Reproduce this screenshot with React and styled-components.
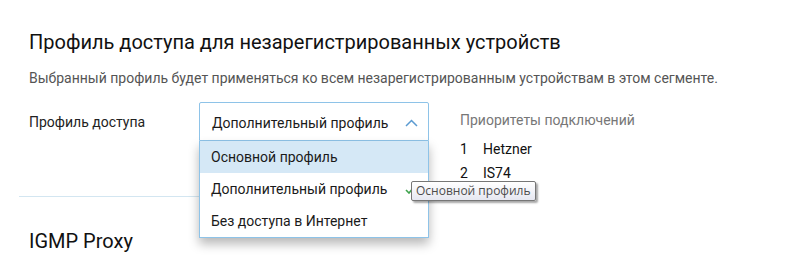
import React from "react";
import styled, { createGlobalStyle } from "styled-components";

const Global = createGlobalStyle`
  html, body { margin: 0; padding: 0; background: #fff; }
  body { font-family: Roboto, "Noto Sans", sans-serif; color: #1f1f1f; }
`;

const Page = styled.div`
  position: relative;
  width: 811px;
  height: 259px;
  overflow: hidden;
  padding-top: 30px;
  box-sizing: border-box;
`;

const Section = styled.section`
  padding: 0 29px;
`;

const Title = styled.h2`
  margin: 0;
  font-size: 20px;
  line-height: 24px;
  font-weight: 400;
  color: #111;
`;

const Description = styled.p`
  margin: 14px 0 0;
  font-size: 14px;
  line-height: 20px;
  color: #555;
`;

const FormRow = styled.div`
  display: flex;
  align-items: flex-start;
  margin-top: 14px;
`;

const Label = styled.div`
  width: 170px;
  padding-top: 10px;
  font-size: 14px;
  line-height: 20px;
  color: #222;
`;

const SelectWrap = styled.div`
  position: relative;
  width: 230px;
`;

const SelectBox = styled.div`
  box-sizing: border-box;
  height: 39px;
  border: 1px solid #8ec3e8;
  border-radius: 2px 2px 0 0;
  display: flex;
  align-items: flex-start;
  justify-content: space-between;
  padding: 10px 10px 0 12px;
  font-size: 14px;
  line-height: 20px;
  color: #1a1a1a;
  background: #fff;
`;

const Chevron = styled.svg`
  margin-top: 6px;
`;

const Dropdown = styled.ul`
  position: absolute;
  left: 0;
  top: 39px;
  width: 230px;
  box-sizing: border-box;
  margin: 0;
  padding: 0;
  list-style: none;
  background: #fff;
  border: 1px solid #8ec3e8;
  border-top: none;
  box-shadow: 0 6px 10px rgba(0, 0, 0, 0.28);
  z-index: 2;
`;

const Option = styled.li`
  position: relative;
  height: 32px;
  padding: 0 11px;
  font-size: 14px;
  line-height: 32px;
  color: #1a1a1a;
  background: ${(p) => (p.$active ? "#d5e8f6" : "#fff")};
`;

const Check = styled.svg`
  position: absolute;
  right: 13px;
  top: 13px;
`;

const Priorities = styled.div`
  margin-left: 31px;
  padding-top: 8px;
`;

const PrioritiesHeader = styled.div`
  font-size: 14px;
  line-height: 20px;
  color: #777;
  margin-bottom: 7px;
`;

const PriorityRow = styled.div`
  display: flex;
  font-size: 14px;
  line-height: 24px;
  color: #111;
`;

const PriorityNum = styled.span`
  width: 23px;
`;

const Divider = styled.hr`
  margin: 11px 0 0 19px;
  width: 420px;
  border: none;
  border-top: 1px solid #d3e6f1;
`;

const IgmpSection = styled(Section)`
  margin-top: 32px;
`;

const Tooltip = styled.div`
  position: absolute;
  left: 411px;
  top: 181px;
  height: 18px;
  padding: 0 4px;
  border: 1px solid #767676;
  border-radius: 2px;
  background: linear-gradient(#ffffff, #e6e7f1);
  box-shadow: 2px 2px 2px rgba(0, 0, 0, 0.35);
  font-family: "Open Sans", "Noto Sans", sans-serif;
  font-size: 12px;
  line-height: 18px;
  color: #4c4c4c;
  z-index: 5;
  white-space: nowrap;
`;

export default function App() {
  return (
    <>
      <Global />
      <Page>
        <Section>
          <Title>Профиль доступа для незарегистрированных устройств</Title>
          <Description>
            Выбранный профиль будет применяться ко всем незарегистрированным устройствам в этом сегменте.
          </Description>
          <FormRow>
            <Label>Профиль доступа</Label>
            <SelectWrap>
              <SelectBox>
                <span>Дополнительный профиль</span>
                <Chevron width="13" height="8" viewBox="0 0 13 8">
                  <path d="M1 7 L6.5 1.5 L12 7" fill="none" stroke="#5b9bd1" strokeWidth="1.5" />
                </Chevron>
              </SelectBox>
              <Dropdown>
                <Option $active>Основной профиль</Option>
                <Option>
                  Дополнительный профиль
                  <Check width="10" height="8" viewBox="0 0 10 8">
                    <path d="M1 4 L4 7 L9 1" fill="none" stroke="#3fa34d" strokeWidth="1.6" />
                  </Check>
                </Option>
                <Option>Без доступа в Интернет</Option>
              </Dropdown>
            </SelectWrap>
            <Priorities>
              <PrioritiesHeader>Приоритеты подключений</PrioritiesHeader>
              <PriorityRow>
                <PriorityNum>1</PriorityNum>
                <span>Hetzner</span>
              </PriorityRow>
              <PriorityRow>
                <PriorityNum>2</PriorityNum>
                <span>IS74</span>
              </PriorityRow>
            </Priorities>
          </FormRow>
        </Section>
        <Divider />
        <IgmpSection>
          <Title>IGMP Proxy</Title>
        </IgmpSection>
        <Tooltip>Основной профиль</Tooltip>
      </Page>
    </>
  );
}
